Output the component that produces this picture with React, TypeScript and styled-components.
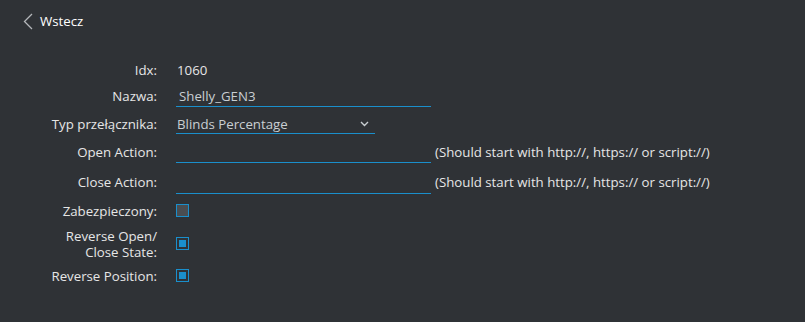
import React from 'react';
import styled, { createGlobalStyle } from 'styled-components';

const Global = createGlobalStyle`
  html, body {
    margin: 0;
    padding: 0;
    background: #2f3236;
  }
  body {
    font-family: "Open Sans", "DejaVu Sans", sans-serif;
    font-size: 13.25px;
    color: #e6e6e6;
  }
`;

const Page = styled.div`
  width: 805px;
  height: 322px;
  background: #2f3236;
  overflow: hidden;
`;

const BackLink = styled.a`
  display: flex;
  align-items: center;
  gap: 7px;
  padding: 12px 0 0 23px;
  height: 18px;
  color: #ffffff;
  text-decoration: none;
  cursor: pointer;
`;

const Form = styled.div`
  display: flex;
  flex-direction: column;
  padding-top: 31px;
`;

const Row = styled.div<{ $top: number }>`
  display: grid;
  grid-template-columns: 157px 1fr;
  column-gap: 19px;
  align-items: start;
  margin-top: ${(p) => p.$top}px;
`;

const Label = styled.label<{ $lh?: number }>`
  text-align: right;
  line-height: ${(p) => p.$lh ?? 18}px;
  color: #e6e6e6;
`;

const Value = styled.div`
  line-height: 18px;
  padding-left: 1px;
`;

const Field = styled.div`
  display: flex;
  align-items: flex-start;
  gap: 4px;
`;

const TextInput = styled.input<{ $w: number; $pb?: number }>`
  box-sizing: content-box;
  width: ${(p) => p.$w - 3}px;
  height: 18px;
  margin: 0;
  padding: 0 0 ${(p) => p.$pb ?? 0}px 3px;
  border: none;
  border-bottom: 1px solid #1a8fcc;
  background: transparent;
  font: inherit;
  line-height: 18px;
  color: #c9ced2;
  outline: none;
`;

const Hint = styled.span`
  line-height: 18px;
  color: #e6e6e6;
`;

const SelectBox = styled.div`
  display: flex;
  align-items: center;
  justify-content: space-between;
  box-sizing: border-box;
  width: 199px;
  height: 19px;
  padding: 0 6px 0 1px;
  border-bottom: 1px solid #1a8fcc;
  line-height: 18px;
  color: #c9ced2;
`;

const CheckWrap = styled.div<{ $mt: number }>`
  padding-top: ${(p) => p.$mt}px;
`;

const Check = styled.span<{ $on?: boolean }>`
  display: block;
  box-sizing: border-box;
  width: 13px;
  height: 13px;
  border: 1px solid #1a8fcc;
  background: ${(p) => (p.$on ? '#2f3236' : '#4a4d51')};
  padding: 2px;
  &::after {
    content: '';
    display: ${(p) => (p.$on ? 'block' : 'none')};
    width: 100%;
    height: 100%;
    background: #1a8fcc;
  }
`;

export default function App() {
  return (
    <Page>
      <Global />
      <BackLink>
        <svg width="10" height="17" viewBox="0 0 10 17">
          <path d="M9 1 L1.5 8.5 L9 16" fill="none" stroke="#b4b7ba" strokeWidth="1.3" />
        </svg>
        <span>Wstecz</span>
      </BackLink>
      <Form>
        <Row $top={0}>
          <Label>Idx:</Label>
          <Value>1060</Value>
        </Row>
        <Row $top={8}>
          <Label>Nazwa:</Label>
          <TextInput $w={255} $pb={1} defaultValue="Shelly_GEN3" />
        </Row>
        <Row $top={8}>
          <Label>Typ przełącznika:</Label>
          <SelectBox>
            <span>Blinds Percentage</span>
            <svg width="9" height="6" viewBox="0 0 9 6">
              <path d="M1 1 L4.5 4.5 L8 1" fill="none" stroke="#c9ced2" strokeWidth="1.4" />
            </svg>
          </SelectBox>
        </Row>
        <Row $top={9}>
          <Label>Open Action:</Label>
          <Field>
            <TextInput $w={255} $pb={1} />
            <Hint>(Should start with http://, https:// or script://)</Hint>
          </Field>
        </Row>
        <Row $top={10}>
          <Label>Close Action:</Label>
          <Field>
            <TextInput $w={255} $pb={2} />
            <Hint>(Should start with http://, https:// or script://)</Hint>
          </Field>
        </Row>
        <Row $top={8}>
          <Label>Zabezpieczony:</Label>
          <CheckWrap $mt={2}>
            <Check />
          </CheckWrap>
        </Row>
        <Row $top={8}>
          <Label $lh={16}>
            Reverse Open/
            <br />
            Close State:
          </Label>
          <CheckWrap $mt={9}>
            <Check $on />
          </CheckWrap>
        </Row>
        <Row $top={7}>
          <Label>Reverse Position:</Label>
          <CheckWrap $mt={2}>
            <Check $on />
          </CheckWrap>
        </Row>
      </Form>
    </Page>
  );
}
